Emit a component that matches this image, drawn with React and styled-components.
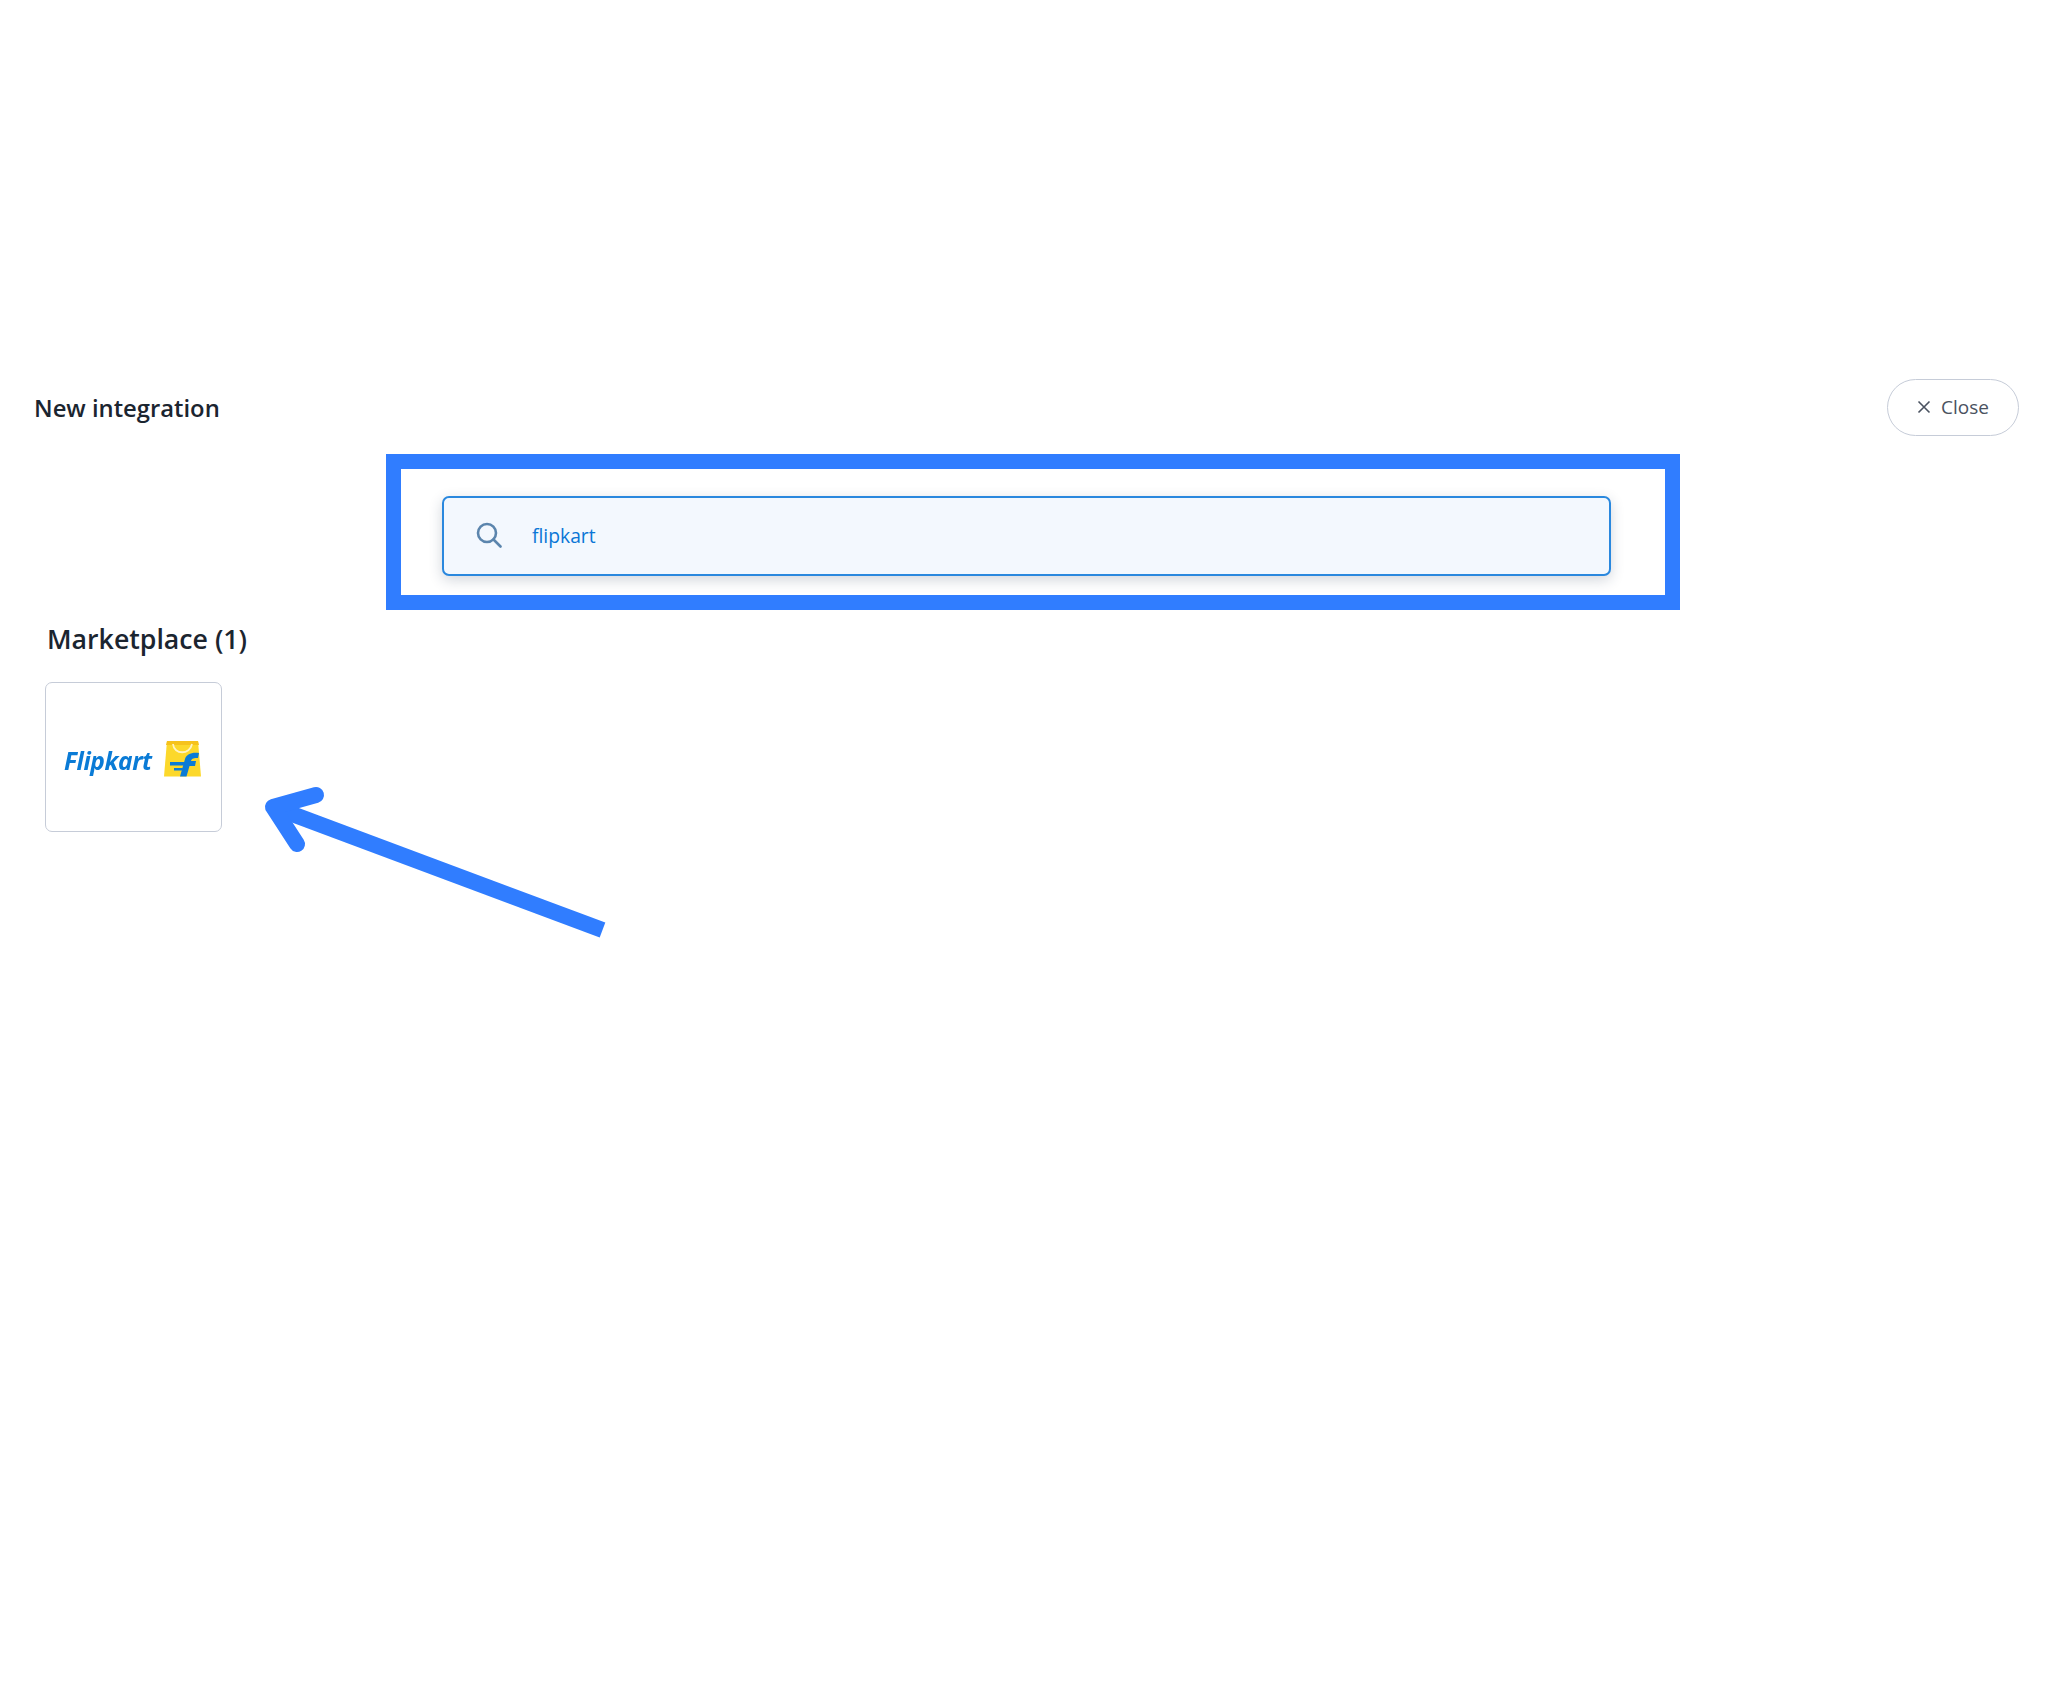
import React from "react";
import styled, { createGlobalStyle } from "styled-components";

const Global = createGlobalStyle`
  html, body { margin: 0; padding: 0; background: #fff; }
  body { font-family: "Open Sans", "Liberation Sans", sans-serif; }
`;

const Page = styled.main`
  position: relative;
  width: 2048px;
  height: 1707px;
  padding-top: 379px;
  box-sizing: border-box;
  overflow: hidden;
`;

const Header = styled.header`
  display: flex;
  align-items: center;
  justify-content: space-between;
  height: 57px;
  padding: 0 29px 0 34px;
`;

const Title = styled.h1`
  margin: 0;
  font-size: 23.8px;
  font-weight: 600;
  color: #1b2530;
`;

const CloseButton = styled.button`
  display: flex;
  align-items: center;
  justify-content: center;
  gap: 10px;
  width: 132px;
  height: 57px;
  box-sizing: border-box;
  padding: 0 2px 2px 2px;
  border: 1px solid #c6ccd8;
  border-radius: 29px;
  background: #fff;
  color: #4a5260;
  font-family: inherit;
  font-size: 19px;
  font-weight: 500;
`;

const Highlight = styled.div`
  box-sizing: border-box;
  width: 1294px;
  height: 156px;
  margin: 18px 0 0 386px;
  padding: 27px 54px 0 41px;
  border: 15px solid #307dff;
`;

const SearchBox = styled.div`
  display: flex;
  align-items: center;
  gap: 30px;
  height: 80px;
  box-sizing: border-box;
  padding: 0 0 2px 32px;
  border: 2px solid #2a88de;
  border-radius: 7px;
  background: #f3f8fe;
  box-shadow: 0 4px 14px rgba(30, 50, 80, 0.2);
`;

const SearchText = styled.span`
  font-size: 19.300px;
  color: #0a76d6;
`;

const SectionTitle = styled.h2`
  margin: 10px 0 0 47px;
  font-size: 26.700px;
  font-weight: 600;
  line-height: 38px;
  color: #1b2530;
`;

const Card = styled.div`
  display: flex;
  align-items: center;
  gap: 12px;
  width: 177px;
  height: 150px;
  box-sizing: border-box;
  margin: 24px 0 0 45px;
  padding: 6px 0 0 18px;
  border: 1px solid #c6ccd8;
  border-radius: 7px;
  background: #fff;
`;

const LogoText = styled.span`
  font-family: "Open Sans", "Liberation Sans", sans-serif;
  font-size: 24.500px;
  font-weight: 700;
  font-style: italic;
  letter-spacing: -0.4px;
  color: #0a7bd6;
  filter: blur(0.4px);
`;

const Bag = styled.svg`
  flex: none;
  margin-top: -4px;
  filter: blur(0.4px);
`;

const Arrow = styled.svg`
  position: absolute;
  left: 0;
  top: 0;
  pointer-events: none;
`;

export default function App() {
  return (
    <Page>
      <Global />
      <Header>
        <Title>New integration</Title>
        <CloseButton>
          <svg width="14" height="14" viewBox="0 0 14 14" fill="none" stroke="#4a5260" strokeWidth="1.6">
            <path d="M1.5 1.5l11 11M12.5 1.500l-11 11" />
          </svg>
          Close
        </CloseButton>
      </Header>
      <Highlight>
        <SearchBox>
          <svg width="26" height="26" viewBox="0 0 26 26" fill="none" stroke="#5b85ad" strokeWidth="2.6" strokeLinecap="round">
            <circle cx="11" cy="11" r="9" />
            <path d="M17.500 17.500L24.500 24.500" />
          </svg>
          <SearchText>flipkart</SearchText>
        </SearchBox>
      </Highlight>
      <SectionTitle>Marketplace (1)</SectionTitle>
      <Card>
        <LogoText>Flipkart</LogoText>
        <Bag width="37" height="37" viewBox="0 0 37 37">
          <path d="M3 1h31l3 35.500H0z" fill="#fcd82b" />
          <path d="M3 1h31l1 4H2z" fill="#f6c21c" />
          <path d="M9 4c1 11 17 11 19 0" fill="none" stroke="#fff3c4" strokeWidth="1.8" />
          <path d="M16 36.500L21 19C22 15 27 12 35 13L34 18C30 18 28 18 27 21H32L31 26H25.500L22.500 36.500Z" fill="#0a7bd6" />
          <path d="M6 22h15l-1 3.500H6zM10 28h9l-.8 2.500H10z" fill="#0a7bd6" />
        </Bag>
      </Card>
      <Arrow width="2048" height="1707" viewBox="0 0 2048 1707" fill="none" stroke="#307dff">
        <path d="M602.500 930L276 808" strokeWidth="16" />
        <path d="M316 795L273 807L297 844" strokeWidth="16" strokeLinecap="round" strokeLinejoin="round" />
      </Arrow>
    </Page>
  );
}
